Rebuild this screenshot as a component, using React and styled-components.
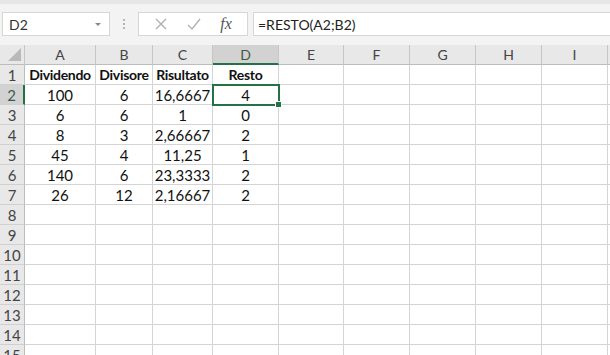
import React from 'react'
import styled, { createGlobalStyle } from 'styled-components'

const Global = createGlobalStyle`
body {
  margin: 0;
  background: #ffffff;
  overflow: hidden;
  font-family: Lato, "Open Sans", sans-serif;
}
`;

const Page = styled.div`
width: 610px;
height: 355px;
overflow: hidden;
`;

const Toolbar = styled.div`
height: 45px;
box-sizing: border-box;
background: #f3f3f3;
border-top: 4px solid #e6e6e6;
display: flex;
align-items: flex-start;
padding-top: 8px;
padding-left: 2px;
`;

const NameBox = styled.div`
width: 108px;
height: 24px;
box-sizing: border-box;
background: #fff;
border: 1px solid #d6d6d6;
display: flex;
align-items: center;
justify-content: space-between;
padding: 0 8px 0 6px;
font-size: 14px;
color: #333;
`;

const Caret = styled.span`
width: 0;
height: 0;
border-left: 3px solid transparent;
border-right: 3px solid transparent;
border-top: 3px solid #888;
`;

const Dots = styled.div`
width: 28px;
height: 24px;
display: flex;
flex-direction: column;
align-items: center;
justify-content: center;
gap: 2px;
& span {
  width: 2px;
  height: 2px;
  background: #b5b5b5;
}
`;

const FxBox = styled.div`
width: 110px;
height: 24px;
box-sizing: border-box;
background: #fff;
border: 1px solid #d6d6d6;
display: flex;
align-items: center;
justify-content: space-around;
padding: 0 6px;
`;

const Fx = styled.span`
font-family: "Liberation Serif", serif;
font-style: italic;
font-size: 16px;
color: #555;
`;

const Formula = styled.div`
flex: 1;
margin-left: 5px;
height: 24px;
box-sizing: border-box;
background: #fff;
border: 1px solid #d6d6d6;
border-right: none;
display: flex;
align-items: center;
padding-left: 4px;
font-size: 14px;
color: #222;
`;

const Grid = styled.div`
display: grid;
grid-template-columns: 25px 71px 57px 60px 66px 65px 66px 66px 66px 66px 66px;
grid-auto-rows: 20px;
`;

const Corner = styled.div`
background: #e8e8e8;
border-right: 1px solid #c6c6c6;
border-bottom: 1px solid #bdbdbd;
position: relative;
&::after {
  content: '';
  position: absolute;
  right: 3px;
  bottom: 3px;
  width: 0;
  height: 0;
  border-left: 13px solid transparent;
  border-bottom: 13px solid #b9b9b9;
}
`;

const ColHead = styled.div`
box-sizing: border-box;
background: ${p => (p.$active ? '#d2d2d2' : '#e8e8e8')};
border-right: 1px solid #c6c6c6;
border-bottom: ${p => (p.$active ? '2px solid #217346' : '1px solid #bdbdbd')};
display: flex;
align-items: center;
justify-content: center;
font-size: 14px;
color: ${p => (p.$active ? '#3d5a48' : '#444')};
`;

const RowHead = styled.div`
box-sizing: border-box;
background: ${p => (p.$active ? '#d2d2d2' : '#e8e8e8')};
border-right: ${p => (p.$active ? '2px solid #217346' : '1px solid #bdbdbd')};
border-bottom: 1px solid #d0d0d0;
display: flex;
align-items: center;
justify-content: center;
font-size: 15px;
color: ${p => (p.$active ? '#3d5a48' : '#444')};
`;

const Cell = styled.div`
box-sizing: border-box;
border-right: 1px solid #d4d4d4;
border-bottom: 1px solid #d4d4d4;
display: flex;
align-items: center;
justify-content: center;
font-size: ${p => (p.$bold ? '14px' : '15px')};
letter-spacing: ${p => (p.$bold ? '-0.3px' : '0')};
font-weight: ${p => (p.$bold ? 700 : 400)};
color: #111;
white-space: nowrap;
position: relative;
${p => p.$selected && `
  outline: 2px solid #217346;
  outline-offset: -1px;
  z-index: 1;
  &::after {
    content: '';
    position: absolute;
    right: -4px;
    bottom: -4px;
    width: 5px;
    height: 5px;
    background: #217346;
    border: 1px solid #fff;
  }
`}
`;

const cols = ['A', 'B', 'C', 'D', 'E', 'F', 'G', 'H', 'I', ''];

const data = [
  ['Dividendo', 'Divisore', 'Risultato', 'Resto'],
  ['100', '6', '16,6667', '4'],
  ['6', '6', '1', '0'],
  ['8', '3', '2,66667', '2'],
  ['45', '4', '11,25', '1'],
  ['140', '6', '23,3333', '2'],
  ['26', '12', '2,16667', '2'],
];

export default function App() {
  const rows = [];
  for (let r = 1; r <= 15; r++) {
    rows.push(<RowHead key={'h' + r} $active={r === 2}>{r}</RowHead>);
    cols.forEach((c, ci) => {
      const v = data[r - 1] ? data[r - 1][ci] || '' : '';
      rows.push(
        <Cell key={ci + '-' + r} $bold={r === 1} $selected={r === 2 && c === 'D'}>{v}</Cell>
      );
    });
  }
  return (
    <Page>
      <Global />
      <Toolbar>
        <NameBox>D2<Caret /></NameBox>
        <Dots><span /><span /><span /></Dots>
        <FxBox>
          <svg width="14" height="14" viewBox="0 0 14 14"><path d="M2 2l10 10M12 2L2 12" stroke="#b0b0b0" strokeWidth="1.4" fill="none" /></svg>
          <svg width="16" height="14" viewBox="0 0 16 14"><path d="M2 8l4 4 8-10" stroke="#b0b0b0" strokeWidth="1.4" fill="none" /></svg>
          <Fx>fx</Fx>
        </FxBox>
        <Formula>=RESTO(A2;B2)</Formula>
      </Toolbar>
      <Grid>
        <Corner />
        {cols.map((c, i) => (
          <ColHead key={'c' + i} $active={c === 'D'}>{c}</ColHead>
        ))}
        {rows}
      </Grid>
    </Page>
  )
}
